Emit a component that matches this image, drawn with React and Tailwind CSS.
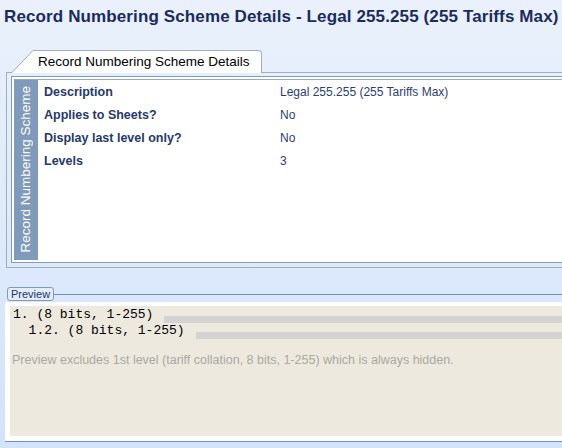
const rows = [
  { label: 'Description', value: 'Legal 255.255 (255 Tariffs Max)' },
  { label: 'Applies to Sheets?', value: 'No' },
  { label: 'Display last level only?', value: 'No' },
  { label: 'Levels', value: '3' }
]

const previewLines = [
  { text: '1. (8 bits, 1-255)' },
  { text: '  1.2. (8 bits, 1-255)' }
]

const App = () => {
  return (
    <div className="w-[562px] h-[448px] overflow-hidden bg-gradient-to-b from-[#eaf1fc] to-[#d3e3fb] font-['Liberation_Sans',Arial,sans-serif]">
      <h1 className="pl-[4px] pt-[6px] h-[28px] leading-[22px] text-[17px] tracking-[0.12px] font-bold text-[#1b2b5c] whitespace-nowrap">
        Record Numbering Scheme Details - Legal 255.255 (255 Tariffs Max)
      </h1>

      {/* tab strip */}
      <div className="mt-[22px] flex h-[23px] items-stretch">
        <div className="w-[6px]" />
        <div className="w-[6px] border-b border-[#a3adb9]" />
        <svg width="21" height="23" viewBox="0 0 21 23" className="shrink-0">
          <polygon points="0,23 21,0.5 21,23" fill="#ffffff" />
          <line x1="0" y1="22.5" x2="21" y2="0.5" stroke="#a3adb9" strokeWidth="1" />
        </svg>
        <div className="w-[229px] shrink-0 bg-white border-t border-r border-[#a3adb9] rounded-tr-[4px] pl-[5px] leading-[22px] text-[13.5px] text-black whitespace-nowrap">
          Record Numbering Scheme Details
        </div>
        <div className="flex-1 border-b border-[#a3adb9]" />
      </div>

      {/* details frame */}
      <div className="ml-[6px] border-l border-b border-[#a3adb9] pt-[3px] pb-[4px] pl-[4px]">
        <div className="border border-r-0 border-[#7f9db9] bg-white pt-[2px] pb-[2px] pl-[2px]">
          <div className="flex h-[181px] border-t border-[#9aa9bb]">
            <div className="w-[24px] shrink-0 bg-[#7f9aba] flex flex-col items-center justify-end pb-[7px]">
              <span className="[writing-mode:vertical-rl] rotate-180 text-white text-[13.5px] leading-[24px] whitespace-nowrap">
                Record Numbering Scheme
              </span>
            </div>
            <div className="flex-1 pl-[6px] pt-px">
              {rows.map((row) => (
                <div key={row.label} className="flex h-[23px] leading-[23px] whitespace-nowrap">
                  <div className="w-[236px] shrink-0 font-bold text-[12.5px] text-[#26396b]">{row.label}</div>
                  <div className="text-[12px] text-[#2c3e70]">{row.value}</div>
                </div>
              ))}
            </div>
          </div>
        </div>
      </div>

      {/* preview */}
      <div className="mt-[19px] flex items-center h-[14px] pl-[7px]">
        <div className="h-[14px] px-[3px] border border-[#7f9db9] rounded-[3px] bg-[#e3ecfb] text-[11px] leading-[12px] text-[#1c3566]">
          Preview
        </div>
        <div className="flex-1 h-px bg-[#6f8fb3]" />
      </div>
      <div className="mt-px ml-[5px] border-b border-[#6f8fb3] bg-white pt-[4px] pb-[5px] pl-[5px]">
        <div className="h-[130px] bg-[#ede9df] pt-px">
          {previewLines.map((line) => (
            <div key={line.text} className="flex items-end h-[16px] pl-[3px]">
              <span className="font-['Liberation_Mono','Courier_New',monospace] text-[13px] leading-[16px] text-black whitespace-pre">
                {line.text}
              </span>
              <div className="flex-1 ml-[11px] h-[7px] bg-[#d4d2d3]" />
            </div>
          ))}
          <div className="mt-[13px] pl-[2px] h-[16px] leading-[16px] text-[12.5px] text-[#aaa8a2] whitespace-nowrap">
            Preview excludes 1st level (tariff collation, 8 bits, 1-255) which is always hidden.
          </div>
        </div>
      </div>
    </div>
  )
}

export default App
